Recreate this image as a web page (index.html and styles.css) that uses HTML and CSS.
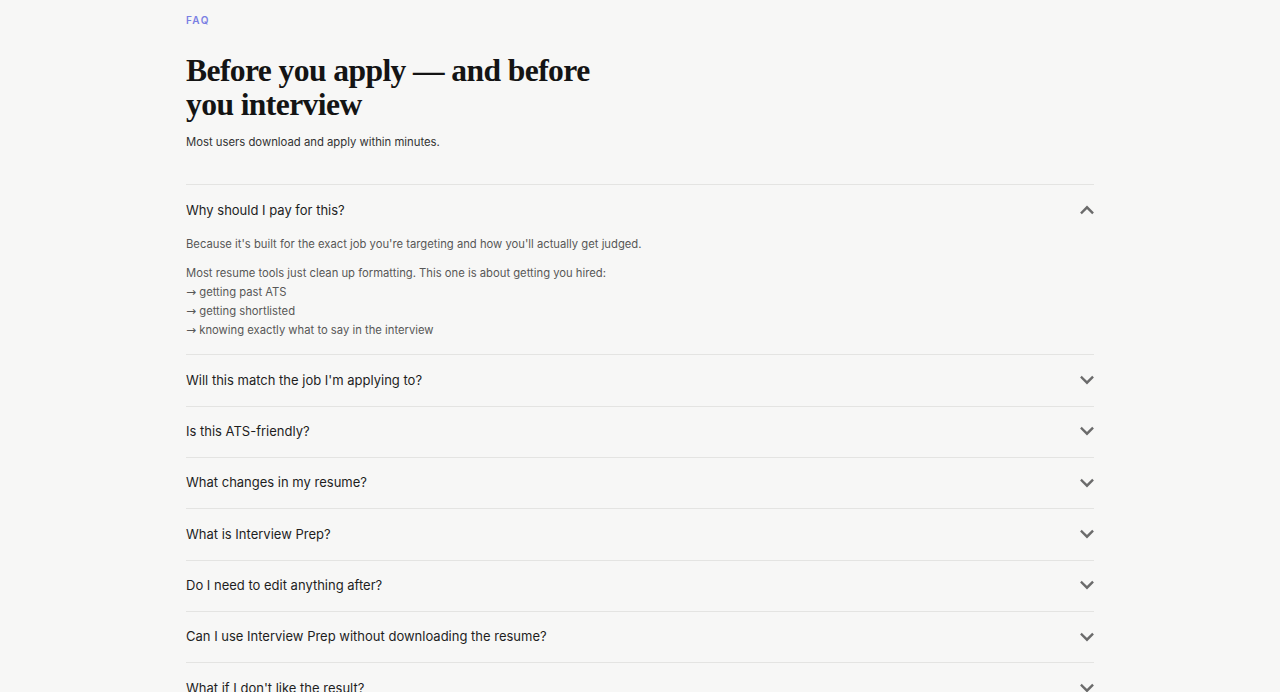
FILE: index.html
```html
<!DOCTYPE html>
<html lang="en">
<head>
<meta charset="utf-8">
<title>FAQ</title>
<link rel="stylesheet" href="styles.css">
</head>
<body>
<section class="faq">
  <div class="eyebrow">FAQ</div>
  <h1 class="title">Before you apply — and before<br>you interview</h1>
  <p class="subtitle">Most users download and apply within minutes.</p>
  <div class="list">
    <div class="item open">
      <div class="q"><span>Why should I pay for this?</span><svg class="chev" viewBox="0 0 14 14"><path d="M1.8 9.5 7 4.3l5.2 5.2"/></svg></div>
      <div class="a">
        <p>Because it's built for the exact job you're targeting and how you'll actually get judged.</p>
        <p>Most resume tools just clean up formatting. This one is about getting you hired:<br><span class="arrow">→</span> getting past ATS<br><span class="arrow">→</span> getting shortlisted<br><span class="arrow">→</span> knowing exactly what to say in the interview</p>
      </div>
    </div>
    <div class="item"><div class="q"><span>Will this match the job I'm applying to?</span><svg class="chev" viewBox="0 0 14 14"><path d="M1.8 4.5 7 9.7l5.2-5.2"/></svg></div></div>
    <div class="item"><div class="q"><span>Is this ATS-friendly?</span><svg class="chev" viewBox="0 0 14 14"><path d="M1.8 4.5 7 9.7l5.2-5.2"/></svg></div></div>
    <div class="item"><div class="q"><span>What changes in my resume?</span><svg class="chev" viewBox="0 0 14 14"><path d="M1.8 4.5 7 9.7l5.2-5.2"/></svg></div></div>
    <div class="item"><div class="q"><span>What is Interview Prep?</span><svg class="chev" viewBox="0 0 14 14"><path d="M1.8 4.5 7 9.7l5.2-5.2"/></svg></div></div>
    <div class="item"><div class="q"><span>Do I need to edit anything after?</span><svg class="chev" viewBox="0 0 14 14"><path d="M1.8 4.5 7 9.7l5.2-5.2"/></svg></div></div>
    <div class="item"><div class="q"><span>Can I use Interview Prep without downloading the resume?</span><svg class="chev" viewBox="0 0 14 14"><path d="M1.8 4.5 7 9.7l5.2-5.2"/></svg></div></div>
    <div class="item"><div class="q"><span>What if I don't like the result?</span><svg class="chev" viewBox="0 0 14 14"><path d="M1.8 4.5 7 9.7l5.2-5.2"/></svg></div></div>
  </div>
</section>
</body>
</html>
```
FILE: styles.css
```css
html, body {
  margin: 0;
  padding: 0;
  background: #f7f7f6;
}
body {
  font-family: Inter, "Noto Sans", sans-serif;
  color: #1c1c1c;
}
.faq {
  max-width: 908px;
  margin: 0 auto;
  padding-top: 14px;
}
.eyebrow {
  font-size: 10px;
  line-height: 12px;
  font-weight: 600;
  letter-spacing: 0.14em;
  color: #7a7fe3;
}
.title {
  margin: 28px 0 0;
  font-family: "Liberation Serif", "DejaVu Serif", serif;
  font-weight: 700;
  font-size: 31.6px;
  line-height: 34px;
  letter-spacing: -0.6px;
  color: #141414;
}
.subtitle {
  margin: 11px 0 0;
  font-size: 11.3px;
  line-height: 18px;
  color: #333;
}
.list {
  margin-top: 33px;
}
.item {
  border-top: 1px solid #e4e4e2;
}
.q {
  display: flex;
  align-items: center;
  justify-content: space-between;
  padding: 14.5px 0 15.5px;
  font-size: 13px;
  line-height: 20.33px;
  color: #1e1e1e;
}
.chev {
  width: 14px;
  height: 14px;
  fill: none;
  stroke: #6b6b6b;
  stroke-width: 2.4;
  stroke-linecap: square;
}
.a {
  padding: 0 0 14px;
  margin-top: 0;
  font-size: 11.25px;
  line-height: 19px;
  color: #575757;
}
.a p {
  margin: 0 0 10px;
}
.a p:last-child {
  margin-bottom: 0;
}
.arrow {
  font-family: "DejaVu Sans", sans-serif;
  font-size: 12px;
  line-height: 1;
}
```
